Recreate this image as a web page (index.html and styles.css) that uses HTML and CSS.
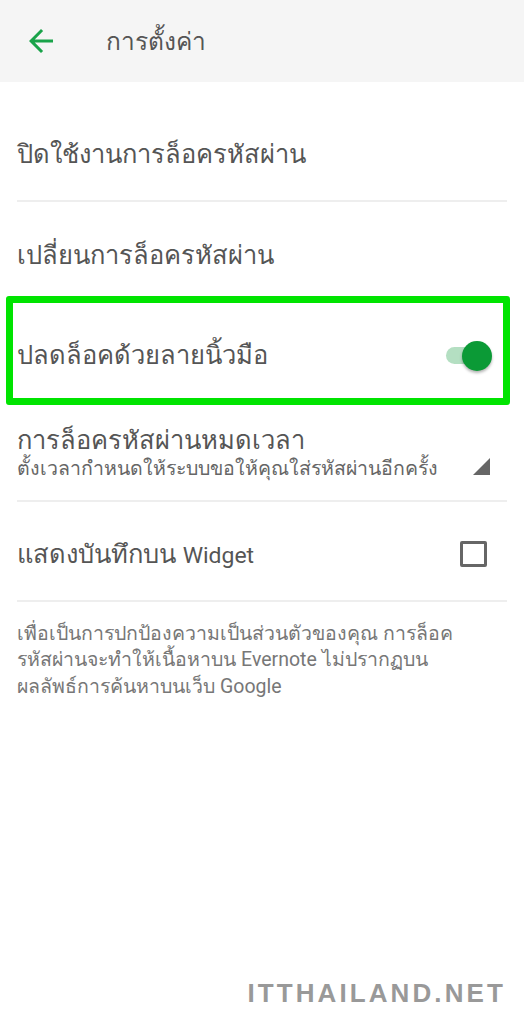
FILE: index.html
```html
<!DOCTYPE html>
<html lang="th">
<head>
  <meta charset="UTF-8">
  <title>การตั้งค่า</title>
  <link rel="stylesheet" href="styles.css">
</head>
<body>
  <div class="header">
    <svg class="back" width="36" height="36" viewBox="0 0 24 24">
      <path d="M20 11H7.83l5.59-5.59L12 4l-8 8 8 8 1.41-1.41L7.83 13H20v-2z" fill="#1aa34a"/>
    </svg>
    <span class="title">การตั้งค่า</span>
  </div>

  <div class="list">
    <div class="row line">
      <span class="label">ปิดใช้งานการล็อครหัสผ่าน</span>
    </div>
    <div class="row">
      <span class="label">เปลี่ยนการล็อครหัสผ่าน</span>
    </div>
    <div class="row marked">
      <span class="label">ปลดล็อคด้วยลายนิ้วมือ</span>
      <div class="toggle"><div class="thumb"></div></div>
      <div class="mark"></div>
    </div>
    <div class="row line">
      <div class="twoline">
        <span class="label">การล็อครหัสผ่านหมดเวลา</span>
        <span class="sub">ตั้งเวลากำหนดให้ระบบขอให้คุณใส่รหัสผ่านอีกครั้ง</span>
      </div>
      <svg class="corner" width="17" height="17" viewBox="0 0 16 16">
        <polygon points="16,0 16,16 0,16" fill="#666"/>
      </svg>
    </div>
    <div class="row line">
      <span class="label">แสดงบันทึกบน <span class="en">Widget</span></span>
      <div class="check"></div>
    </div>
  </div>

  <p class="note">เพื่อเป็นการปกป้องความเป็นส่วนตัวของคุณ การล็อค<br>รหัสผ่านจะทำให้เนื้อหาบน <span class="en">Evernote</span> ไม่ปรากฏบน<br>ผลลัพธ์การค้นหาบนเว็บ <span class="en">Google</span></p>

  <div class="watermark">ITTHAILAND.NET</div>
</body>
</html>
```

FILE: styles.css
```css
body {
  margin: 0;
  background: #fff;
  font-family: 'Noto Sans', 'DejaVu Sans', sans-serif;
  color: #555;
  height: 1024px;
  position: relative;
}

.header {
  height: 82px;
  background: #f5f5f5;
  display: flex;
  align-items: center;
  padding-left: 23px;
}

.back {
  margin-right: 47px;
}

.title {
  font-size: 24.5px;
  color: #555;
}

.list {
  padding: 20px 17px 0 17px;
}

.row {
  height: 100px;
  display: flex;
  align-items: center;
  justify-content: space-between;
  box-sizing: border-box;
  position: relative;
  padding-top: 6px;
}

.row.line {
  border-bottom: 2px solid #eee;
}

.label {
  font-size: 25.5px;
  color: #555;
}

.en {
  font-family: Roboto, sans-serif;
  font-size: 0.9em;
}

.twoline {
  display: flex;
  flex-direction: column;
  margin-top: -2px;
}

.twoline .label {
  line-height: 30px;
}

.sub {
  font-size: 19.5px;
  line-height: 28px;
  color: #666;
}

.corner {
  margin-right: 17px;
  margin-top: 24px;
}

.toggle {
  width: 44px;
  height: 17px;
  border-radius: 9px;
  background: #b4dfc2;
  position: relative;
  margin-right: 17px;
}

.thumb {
  position: absolute;
  right: -2px;
  top: -6px;
  width: 30px;
  height: 30px;
  border-radius: 50%;
  background: #0b9a36;
  box-shadow: 0 2px 3px rgba(0,0,0,0.3);
}

.mark {
  position: absolute;
  left: -11px;
  top: -6px;
  width: 490px;
  height: 95px;
  border: 7px solid #00e400;
  border-radius: 3px;
}

.check {
  width: 21px;
  height: 20px;
  border: 3px solid #666;
  border-radius: 2px;
  margin-right: 20px;
}

.note {
  margin: 18px 17px 0 17px;
  font-size: 19.5px;
  line-height: 26px;
  color: #777;
}

.note .en {
  font-size: 1em;
}

.watermark {
  position: absolute;
  right: 18px;
  bottom: 15px;
  font-family: 'Liberation Sans', sans-serif;
  font-weight: bold;
  font-size: 26px;
  color: #999;
  letter-spacing: 3.1px;
}
```
